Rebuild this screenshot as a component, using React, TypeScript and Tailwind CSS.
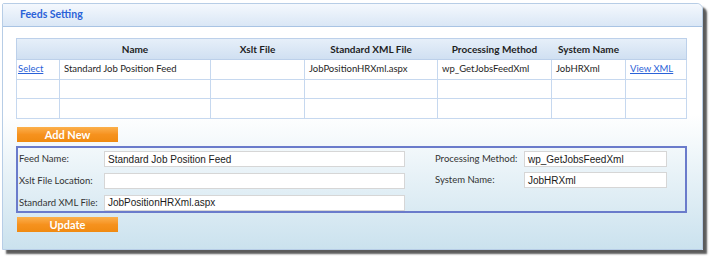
const cols = [43, 151, 94, 133, 114, 74, 61]
const heads = ['', 'Name', 'Xslt File', 'Standard XML File', 'Processing Method', 'System Name', '']

function OrangeButton({ label }: { label: string }) {
  return (
    <button className="ml-px flex h-[15px] w-[101px] items-center justify-center bg-gradient-to-b from-[#fbb04a] via-[#f6921e] to-[#f08a10] text-[11px] font-bold leading-none text-white">
      {label}
    </button>
  )
}

function Field({ value, width }: { value: string; width: string }) {
  return (
    <div
      className={`${width} flex h-[16px] items-center border border-[#d6d6d6] bg-white pl-[3px] font-['Liberation_Sans',Arial,sans-serif] text-[10px] text-[#1a1a1a]`}
    >
      {value}
    </div>
  )
}

export default function App() {
  const rows = [
    ['Select', 'Standard Job Position Feed', '', 'JobPositionHRXml.aspx', 'wp_GetJobsFeedXml', 'JobHRXml', 'View XML'],
    ['', '', '', '', '', '', ''],
    ['', '', '', '', '', '', ''],
  ]

  return (
    <div className="h-[259px] w-[714px] bg-white pl-[2px] pt-[3px] font-['Lato','Open_Sans',sans-serif]">
      <div className="h-[247px] w-[701px] rounded-tr-[6px] rounded-tl-[2px] border border-[#b7cde6] bg-gradient-to-b from-white from-45% to-[#cbe2ee] shadow-[4px_4px_2px_rgba(50,50,50,0.8)]">
        {/* header strip */}
        <div className="flex h-[23px] items-center rounded-tr-[6px] border-b border-[#a9c4e4] bg-gradient-to-b from-[#f4f8fd] to-[#dae7f6] pl-[17px] text-[10.5px] font-bold text-[#2a62d8]">
          Feeds Setting
        </div>

        <div className="pl-[13px] pt-[11px]">
          {/* grid */}
          <table className="w-[670px] table-fixed border-collapse border border-[#bcd0ea] text-[9.5px] text-[#1e1e1e]">
            <colgroup>
              {cols.map((w, i) => (
                <col key={i} style={{ width: w }} />
              ))}
            </colgroup>
            <thead>
              <tr className="h-[21px] bg-gradient-to-b from-[#e6eff9] to-[#cfdff1]">
                {heads.map((h, i) => (
                  <th key={i} className="border-b border-[#bcd0ea] text-center text-[10px] font-bold">
                    {h}
                  </th>
                ))}
              </tr>
            </thead>
            <tbody>
              {rows.map((r, ri) => (
                <tr key={ri} className={ri === 1 ? 'h-[19px]' : 'h-[20px]'}>
                  {r.map((c, ci) => (
                    <td
                      key={ci}
                      className={`border border-[#c6d8ef] ${ci === 0 ? 'pl-px' : 'pl-[4px]'} ${
                        ci === 0 || ci === 6 ? 'text-[#2a62d8] underline' : ''
                      }`}
                    >
                      {c}
                    </td>
                  ))}
                </tr>
              ))}
            </tbody>
          </table>

          <div className="mt-[8px]">
            <OrangeButton label="Add New" />
          </div>

          {/* edit form */}
          <div className="mt-[4px] flex h-[67px] w-[671px] border-2 border-[#6a7bcb] pl-px pt-[3px] text-[9.5px] text-[#333]">
            <div className="grid grid-cols-[85px_301px] items-center gap-y-[5px]">
              <span>Feed Name:</span>
              <Field value="Standard Job Position Feed" width="w-[301px]" />
              <span>Xslt File Location:</span>
              <Field value="" width="w-[301px]" />
              <span>Standard XML File:</span>
              <Field value="JobPositionHRXml.aspx" width="w-[301px]" />
            </div>
            <div className="ml-[30px] grid h-fit grid-cols-[89px_143px] items-center gap-y-[5px]">
              <span>Processing Method:</span>
              <Field value="wp_GetJobsFeedXml" width="w-[143px]" />
              <span>System Name:</span>
              <Field value="JobHRXml" width="w-[143px]" />
            </div>
          </div>

          <div className="mt-[4px]">
            <OrangeButton label="Update" />
          </div>
        </div>
      </div>
    </div>
  )
}
